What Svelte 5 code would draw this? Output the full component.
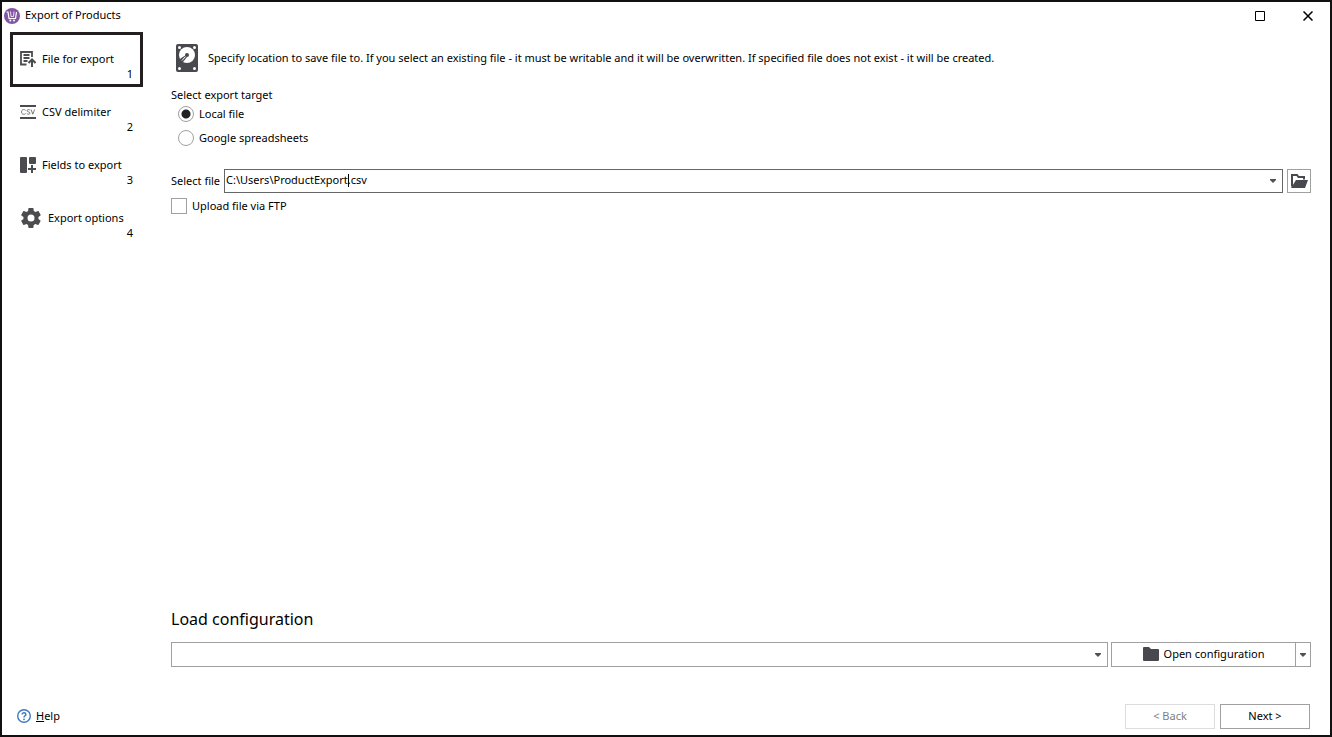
<script lang="ts">
	interface Step {
		label: string;
		icon: string;
	}

	const steps: Step[] = [
		{ label: 'File for export', icon: 'file' },
		{ label: 'CSV delimiter', icon: 'csv' },
		{ label: 'Fields to export', icon: 'fields' },
		{ label: 'Export options', icon: 'gear' }
	];

	let current = $state(0);
	let target = $state('local');
	let path = $state('C:\\Users\\ProductExport.csv');
	let upload = $state(false);
	let configuration = $state('');
	let editing = $state(false);
</script>

{#snippet arrow()}
	<svg class="arrow" width="6" height="4" viewBox="0 0 6 4" aria-hidden="true">
		<path d="M0 0h6v1L3 4 0 1z" fill="#505055" />
	</svg>
{/snippet}

<div class="window">
	<header class="titlebar">
		<svg width="16" height="16" viewBox="0 0 16 16" aria-hidden="true">
			<circle cx="8" cy="8" r="8" fill="#8455a5" />
			<path d="M2.500 4h1.500l1 6.500h6.500L12.500 4" fill="none" stroke="#fff" stroke-width="1.200" />
			<path d="M6.500 3.500L7 8.500h2.500l.5-5" fill="none" stroke="#e9def1" />
			<circle cx="6.300" cy="12.500" r="1" fill="#fff" />
			<circle cx="10" cy="12.500" r="1" fill="#fff" />
		</svg>
		<span class="title">Export of Products</span>
		<button class="control" aria-label="Maximize">
			<svg width="10" height="10" viewBox="0 0 10 10">
				<path d="M.5.5h9v9h-9z" fill="none" stroke="#000" />
			</svg>
		</button>
		<button class="control" aria-label="Close">
			<svg width="10" height="10" viewBox="0 0 10 10">
				<path d="M.5.5l9 9M9.5.5l-9 9" fill="none" stroke="#000" stroke-width="1.5" />
			</svg>
		</button>
	</header>

	<div class="body">
		<nav class="steps">
			{#each steps as step, i}
				<button class="step" class:active={i === current} onclick={() => (current = i)}>
					{#if step.icon === 'file'}
						<svg width="16" height="16" viewBox="0 0 16 16">
							<path
								d="M12 6V1H1v12.500h5.500M3.500 4h6M3.500 7h6M3.500 10h4"
								fill="none"
								stroke="#4b4b50"
								stroke-width="1.8"
							/>
							<path d="M12 16V8.500M8.500 12L12 8.500l3.500 3.500" fill="none" stroke="#4b4b50" stroke-width="2" />
						</svg>
					{:else if step.icon === 'csv'}
						<svg width="16" height="16" viewBox="0 0 16 16">
							<path d="M0 2h16M0 14h16" stroke="#4b4b50" stroke-width="2" />
							<path
								d="M5.500 6.500C5 5 1.500 5.200 1.500 8s3.500 2.800 4 1.500M10 6.400C9.500 5.200 7 5.300 7 6.700s3 1 3 2.400-2.500 1.500-3.200.3M11 5.500l1.800 4.700 1.800-4.700"
								fill="none"
								stroke="#77777b"
							/>
						</svg>
					{:else if step.icon === 'fields'}
						<svg width="16" height="16" viewBox="0 0 16 16" fill="#4b4b50">
							<rect width="7" height="16" rx="1" />
							<rect x="9" width="7" height="7" rx="1" />
							<path d="M11 8h2v3h3v2h-3v3h-2v-3H8v-2h3z" />
						</svg>
					{:else}
						<svg class="gear" width="22" height="22" viewBox="1 1 22 22" fill="#4b4b50">
							<path
								d="M19.4 13c0-.3.1-.6.1-1s0-.7-.1-1l2.1-1.6c.2-.2.2-.4.1-.6l-2-3.5c-.1-.2-.4-.3-.6-.2l-2.500 1a7 7 0 0 0-1.700-1L14.400 2.400c0-.2-.2-.4-.5-.4h-4c-.2 0-.4.2-.5.4L9.100 5.100a7 7 0 0 0-1.700 1l-2.500-1c-.2-.1-.5 0-.6.2l-2 3.500c-.1.2-.1.5.1.6L4.500 11a8 8 0 0 0 0 2l-2.100 1.600c-.2.2-.2.4-.1.6l2 3.500c.1.2.4.3.6.2l2.500-1a7 7 0 0 0 1.700 1l.3 2.700c0 .2.2.4.5.4h4c.2 0 .5-.2.5-.4l.3-2.700a7 7 0 0 0 1.700-1l2.500 1c.2.1.5 0 .6-.2l2-3.500c.1-.2.1-.5-.1-.6zM12 15.500a3.500 3.500 0 1 1 0-7 3.500 3.500 0 0 1 0 7z"
							/>
						</svg>
					{/if}
					<span class="label">{step.label}</span>
					<span class="number">{i + 1}</span>
				</button>
			{/each}
		</nav>

		<main class="page">
			<div class="intro">
				<svg width="22" height="28" viewBox="0 0 22 28" aria-hidden="true">
					<rect width="22" height="28" rx="2" fill="#48484f" />
					<circle cx="11" cy="11" r="8" fill="#fff" />
					<circle cx="11" cy="11" r="2" fill="#48484f" />
					<path d="M10 11L4.500 14.500 3 18h4l4-5z" fill="#48484f" />
					<path d="M6 16.500l3.500-4" stroke="#fff" />
					<g fill="#fff">
						<circle cx="3.5" cy="3.5" r="1.5" />
						<circle cx="18.5" cy="3.5" r="1.5" />
						<circle cx="3.5" cy="24.5" r="1.5" />
						<circle cx="18.5" cy="24.5" r="1.5" />
					</g>
				</svg>
				<span>
					Specify location to save file to. If you select an existing file - it must be writable and it
					will be overwritten. If specified file does not exist - it will be created.
				</span>
			</div>

			<fieldset class="target">
				<legend>Select export target</legend>
				<label>
					<input type="radio" name="target" value="local" bind:group={target} />
					Local file
				</label>
				<label>
					<input type="radio" name="target" value="google" bind:group={target} />
					Google spreadsheets
				</label>
			</fieldset>

			<div class="file">
				<label for="path">Select file</label>
				<div class="combo">
					<input
						id="path"
						type="text"
						bind:value={path}
						onfocus={() => (editing = true)}
						onblur={() => (editing = false)}
					/>
					{#if !editing}
						<span class="caret"></span>
					{/if}
					<button class="drop" aria-label="Recent files">{@render arrow()}</button>
				</div>
				<button class="browse" aria-label="Browse">
					<svg width="17" height="14" viewBox="0 0 17 14">
						<path d="M1 12.5V1h5l1.500 2H13v2.500" fill="none" stroke="#48484f" stroke-width="2" />
						<path d="M5 6h12l-3 8H0z" fill="#48484f" />
					</svg>
				</button>
			</div>

			<label class="upload">
				<input type="checkbox" bind:checked={upload} />
				Upload file via FTP
			</label>

			<section class="configuration">
				<h2 id="load">Load configuration</h2>
				<div class="load-row">
					<div class="select">
						<select aria-labelledby="load" bind:value={configuration}>
							<option value=""></option>
						</select>
						{@render arrow()}
					</div>
					<div class="split">
						<button class="open">
							<svg width="16" height="14" viewBox="0 0 16 14" aria-hidden="true">
								<path d="M0 1q0-1 1-1h5l2 2h7q1 0 1 1v10q0 1-1 1H1q-1 0-1-1z" fill="#48484f" />
							</svg>
							Open configuration
						</button>
						<button class="more" aria-label="More">{@render arrow()}</button>
					</div>
				</div>
			</section>
		</main>
	</div>

	<footer class="footer">
		<a class="help" href="#help">
			<svg width="14" height="14" viewBox="0 0 14 14" aria-hidden="true">
				<circle cx="7" cy="7" r="6.3" fill="none" stroke="#3d78c0" stroke-width="1.4" />
				<path
					d="M5.100 5.500c0-2.300 3.800-2.200 3.800 0C8.900 6.800 7 6.800 7 8.500"
					fill="none"
					stroke="#3d78c0"
					stroke-width="1.4"
				/>
				<circle cx="7" cy="10.300" r=".9" fill="#3d78c0" />
			</svg>
			<span><u>H</u>elp</span>
		</a>
		<button class="nav" disabled={current === 0} onclick={() => current--}>&lt; Back</button>
		<button class="nav" onclick={() => (current = Math.min(current + 1, steps.length - 1))}>
			Next &gt;
		</button>
	</footer>
</div>

<style>
	:global(body) {
		background: #fff;
	}

	.window {
		box-sizing: border-box;
		min-height: 100vh;
		display: flex;
		flex-direction: column;
		border: 2px solid #111;
		background: #fff;
		color: #000;
		font-family: 'Noto Sans', 'Open Sans', sans-serif;
		font-size: 11px;
		line-height: 16px;
	}

	svg {
		display: block;
		flex: none;
	}

	button,
	input,
	select {
		box-sizing: border-box;
		margin: 0;
		padding: 0;
		border: 1px solid #a0a0a0;
		border-radius: 0;
		background: #fff;
		color: inherit;
		font: inherit;
	}

	.titlebar {
		display: flex;
		align-items: center;
		height: 28px;
		padding-left: 2px;
	}

	.title {
		flex: 1;
		padding: 0 0 2px 5px;
	}

	.control {
		display: flex;
		align-items: center;
		justify-content: center;
		width: 48px;
		height: 28px;
		border: none;
	}

	.control:last-child {
		width: 44px;
	}

	.control:not(:last-child) {
		width: 52px;
	}

	.body {
		flex: 1;
		display: flex;
	}

	.steps {
		width: 131px;
		padding: 3px 28px 0 9px;
	}

	.step {
		display: grid;
		grid-template-columns: auto 1fr;
		align-content: end;
		align-items: center;
		column-gap: 6px;
		width: 100%;
		height: 53px;
		padding: 0 9px 4px;
		border: none;
		text-align: left;
	}

	.step.active {
		outline: 3px solid #231f20;
		outline-offset: -2px;
	}

	.gear {
		margin: -3px 0;
	}

	.number {
		grid-column: 1 / -1;
		margin-top: -1px;
		text-align: right;
	}

	.page {
		flex: 1;
		display: flex;
		flex-direction: column;
		padding: 14px 19px 0 1px;
	}

	.intro {
		display: flex;
		align-items: center;
		gap: 10px;
		padding-left: 5px;
	}

	.target {
		display: flex;
		flex-direction: column;
		margin: 15px 0 0;
		padding: 0;
		border: none;
	}

	.target legend {
		height: 15px;
		padding: 0;
	}

	.target label {
		display: flex;
		align-items: center;
		gap: 5px;
		height: 24px;
		padding-left: 7px;
	}

	input[type='radio'],
	input[type='checkbox'] {
		appearance: none;
		width: 16px;
		height: 16px;
	}

	input[type='radio'] {
		border-radius: 50%;
	}

	input[type='radio']:checked {
		background: radial-gradient(circle, #222 4px, #fff 5px);
	}

	input[type='checkbox']:checked {
		background: #222;
		box-shadow: inset 0 0 0 3px #fff;
	}

	.file {
		display: flex;
		align-items: center;
		gap: 4px;
		margin-top: 19px;
	}

	.combo {
		position: relative;
		flex: 1;
		display: flex;
		height: 24px;
		box-sizing: border-box;
		border: 1px solid #666;
	}

	.combo input {
		flex: 1;
		min-width: 0;
		padding: 0 0 2px 1px;
		border: none;
		outline: none;
	}

	.caret {
		position: absolute;
		top: 4px;
		left: 123px;
		width: 1px;
		height: 13px;
		background: #000;
	}

	.drop {
		display: flex;
		align-items: center;
		justify-content: center;
		width: 18px;
		border: none;
	}

	.browse {
		display: flex;
		align-items: center;
		justify-content: center;
		width: 24px;
		height: 24px;
	}

	.upload {
		align-self: flex-start;
		display: flex;
		align-items: center;
		gap: 5px;
		margin-top: 5px;
	}

	.configuration {
		margin-top: auto;
	}

	h2 {
		margin: 0 0 11px;
		font-size: 16px;
		font-weight: 400;
		line-height: 24px;
	}

	.load-row {
		display: flex;
		gap: 3px;
	}

	.select {
		position: relative;
		flex: 1;
	}

	.select select {
		display: block;
		width: 100%;
		height: 25px;
		appearance: none;
	}

	.select .arrow {
		position: absolute;
		top: 11px;
		right: 7px;
		pointer-events: none;
	}

	.split {
		display: flex;
		width: 200px;
	}

	.open {
		flex: 1;
		display: flex;
		align-items: center;
		justify-content: center;
		gap: 5px;
		padding-bottom: 2px;
	}

	.more {
		display: flex;
		align-items: center;
		justify-content: center;
		width: 15px;
		border-left: none;
	}

	.footer {
		display: flex;
		align-items: center;
		gap: 5px;
		padding: 37px 20px 6px 15px;
	}

	.help {
		display: flex;
		align-items: center;
		gap: 5px;
		margin-right: auto;
		padding-bottom: 2px;
		color: inherit;
		text-decoration: none;
	}

	.nav {
		width: 90px;
		height: 25px;
		padding-bottom: 2px;
	}

	.nav:disabled {
		border-color: #ddd;
		color: #808080;
	}
</style>
